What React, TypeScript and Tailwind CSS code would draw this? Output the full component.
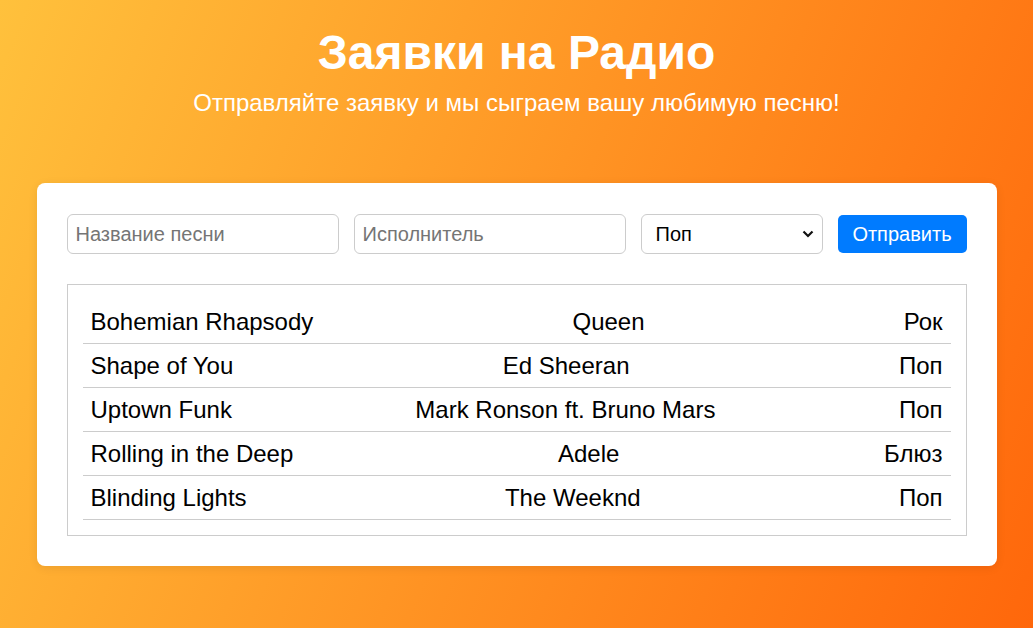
import { useState } from 'react';

type Request = {
  title: string;
  artist: string;
  genre: string;
};

const initialRequests: Request[] = [
  { title: 'Bohemian Rhapsody', artist: 'Queen', genre: 'Рок' },
  { title: 'Shape of You', artist: 'Ed Sheeran', genre: 'Поп' },
  { title: 'Uptown Funk', artist: 'Mark Ronson ft. Bruno Mars', genre: 'Поп' },
  { title: 'Rolling in the Deep', artist: 'Adele', genre: 'Блюз' },
  { title: 'Blinding Lights', artist: 'The Weeknd', genre: 'Поп' },
];

export default function App() {
  const [requests, setRequests] = useState<Request[]>(initialRequests);
  const [title, setTitle] = useState('');
  const [artist, setArtist] = useState('');
  const [genre, setGenre] = useState('Поп');

  const handleSubmit = (e: React.FormEvent) => {
    e.preventDefault();
    if (!title.trim() || !artist.trim()) return;
    setRequests(prev => [...prev, { title, artist, genre }]);
    setTitle('');
    setArtist('');
  };

  return (
    <main className="min-h-screen bg-[linear-gradient(112deg,#ffc13c,#ff670b)] font-['Liberation_Sans',Arial,sans-serif] pt-[25px] pb-10">
      <div className="text-center text-white">
        <h1 className="text-[48px] leading-[55px] font-bold">Заявки на Радио</h1>
        <p className="mt-[9px] text-[24px] leading-[28px]">
          Отправляйте заявку и мы сыграем вашу любимую песню!
        </p>
      </div>

      <div className="mx-auto mt-[66px] w-[960px] rounded-lg bg-white px-[30px] pt-[31px] pb-[30px] shadow-[0_2px_10px_rgba(0,0,0,0.08)]">
        <form onSubmit={handleSubmit} className="flex items-center gap-[15px]">
          <input
            value={title}
            onChange={e => setTitle(e.target.value)}
            placeholder="Название песни"
            className="h-10 min-w-0 flex-1 rounded-md border border-[#ccc] px-2 text-[20px] text-black placeholder:text-[#757575] outline-none"
          />
          <input
            value={artist}
            onChange={e => setArtist(e.target.value)}
            placeholder="Исполнитель"
            className="h-10 min-w-0 flex-1 rounded-md border border-[#ccc] px-2 text-[20px] text-black placeholder:text-[#757575] outline-none"
          />
          <div className="relative w-[182px]">
            <select
              value={genre}
              onChange={e => setGenre(e.target.value)}
              className="h-10 w-full appearance-none rounded-md border border-[#ccc] bg-white pl-[14px] pr-8 text-[20px] text-black outline-none"
            >
              <option>Поп</option>
              <option>Рок</option>
              <option>Блюз</option>
              <option>Джаз</option>
            </select>
            <svg
              className="pointer-events-none absolute right-[8px] top-[14px] h-3 w-[14px]"
              viewBox="0 0 14 12"
              fill="none"
              stroke="#111"
              strokeWidth="2.2"
            >
              <path d="M2.5 3.5 7 8l4.5-4.5" />
            </svg>
          </div>
          <button
            type="submit"
            className="h-[38px] w-[129px] rounded-[5px] bg-[#007bff] text-[20px] text-white"
          >
            Отправить
          </button>
        </form>

        <div className="mt-[30px] border border-[#ccc] p-[15px]">
          {requests.map((r, i) => (
            <div
              key={i}
              className="flex h-[44px] items-center justify-between border-b border-[#ccc] px-2 text-[24px] text-black"
            >
              <span>{r.title}</span>
              <span>{r.artist}</span>
              <span>{r.genre}</span>
            </div>
          ))}
        </div>
      </div>
    </main>
  );
}
